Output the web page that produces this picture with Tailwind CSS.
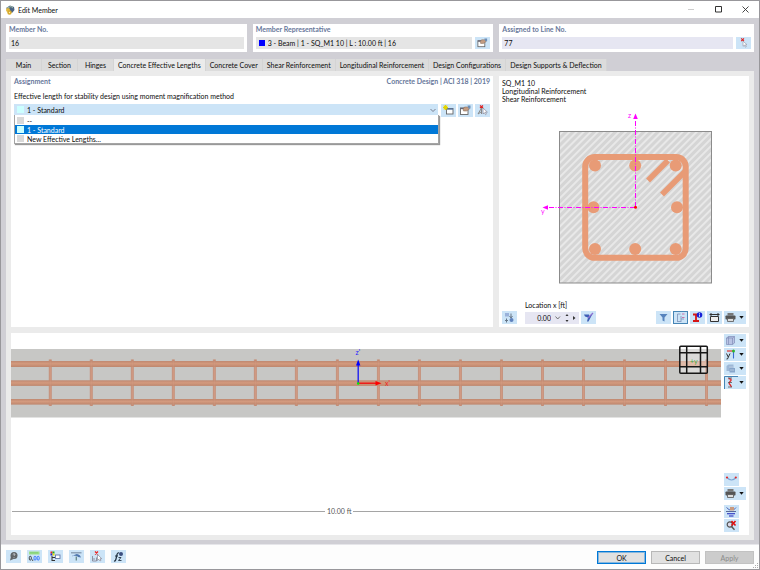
<!DOCTYPE html>
<html lang="en">
<head>
<meta charset="utf-8">
<title>Edit Member</title>
<script src="https://cdn.jsdelivr.net/npm/@tailwindcss/browser@4"></script>
</head>
<body class="min-h-screen flex flex-col border border-[#98979b] bg-[#d0cfd5] text-[7px] leading-[8px] text-[#0c0c0c] font-[Lato,'Open_Sans',sans-serif]">

<header class="h-[17px] bg-white flex items-center pl-1 shrink-0">
  <svg class="w-[10px] h-[10px]" viewBox="0 0 10 10"><path d="M1 3 5 0.5 9 2 9.5 5 7 8 4 6Z" fill="#4a6384"/><path d="M2 3 6 1.5 8 3" stroke="#9db8a0" fill="none"/><circle cx="3" cy="5" r="2" fill="#e2b93c"/><circle cx="4.500" cy="7.500" r="2.200" fill="#d7a92c"/><circle cx="4.500" cy="7.500" r=".7" fill="#fff2b0"/></svg>
  <h1 class="ml-[3px]">Edit Member</h1>
  <div class="ml-auto flex items-center">
    <button aria-label="Minimize" class="w-[27px] flex justify-center"><svg class="w-[7px] h-[7px]" viewBox="0 0 7 7"><path d="M0 3.500h6" stroke="#ccc"/></svg></button>
    <button aria-label="Maximize" class="w-[27px] flex justify-center"><svg class="w-[7px] h-[7px]" viewBox="0 0 7 7"><path d="M.5.5h6v5.500H.5z" fill="none" stroke="#333"/></svg></button>
    <button aria-label="Close" class="w-[27px] flex justify-center"><svg class="w-[7px] h-[7px]" viewBox="0 0 7 7"><path d="M.5.5l6 6M6.500.5l-6 6" stroke="#333" stroke-width=".9"/></svg></button>
  </div>
</header>

<main class="flex-1 flex flex-col px-[5px] pt-[6px] pb-[4px]">
  <section class="grid grid-cols-[241fr_241fr_255fr] gap-[6px]">
    <div class="bg-white px-[3px] pt-[1px] pb-[3px]">
      <label for="no" class="block leading-[9px] font-bold text-[#68789b]">Member No.</label>
      <input id="no" readonly value="16" class="mt-[3px] block w-full h-[12px] bg-[#e5e5e5] px-[2px]">
    </div>
    <div class="bg-white px-[3px] pt-[1px] pb-[3px]">
      <label for="rep" class="block leading-[9px] font-bold text-[#68789b]">Member Representative</label>
      <div class="mt-[3px] flex gap-[3px]">
        <div class="flex-1 flex items-center h-[12px] bg-[#e5e5e5] px-[3px] gap-[3px]"><span class="size-[6px] bg-[#0000ff]"></span><input id="rep" readonly value="3 - Beam | 1 - SQ_M1 10 | L : 10.00 ft | 16" class="flex-1 bg-transparent"></div>
        <button aria-label="Edit representative" class="w-[15px] h-[12px] bg-[#cce4f7]"><svg class="w-[15px] h-[12px]" viewBox="0 0 15 13"><use href="#edit"/></svg></button>
      </div>
    </div>
    <div class="bg-white px-[3px] pt-[1px] pb-[3px]">
      <label for="line" class="block leading-[9px] font-bold text-[#68789b]">Assigned to Line No.</label>
      <div class="mt-[3px] flex gap-[3px]">
        <input id="line" value="77" class="flex-1 h-[12px] bg-[#e6e6f2] px-[2px]">
        <button aria-label="Pick line" class="w-[15px] h-[12px] bg-[#cce4f7]"><svg class="w-[15px] h-[12px]" viewBox="0 0 15 13"><path d="M5 1.500l3 3M8 1.500l-3 3" stroke="#d22" stroke-width="1.100"/><path d="M7 4.500v5.500l1.500-1.200 1 2.200 1-.5-1-2 1.800-.2z" fill="#fff" stroke="#889" stroke-width=".6"/></svg></button>
      </div>
    </div>
  </section>

  <nav role="tablist" class="mt-[7px] flex">
    <div class="flex h-[12px] bg-[#dcdcdc] [&>button]:min-w-[36px] [&>button]:px-[4px] [&>button]:border-r [&>button]:border-[#d4d4d4]">
      <button role="tab">Main</button>
      <button role="tab">Section</button>
      <button role="tab">Hinges</button>
      <button role="tab" aria-selected="true" class="bg-[#ebebeb]">Concrete Effective Lengths</button>
      <button role="tab">Concrete Cover</button>
      <button role="tab">Shear Reinforcement</button>
      <button role="tab">Longitudinal Reinforcement</button>
      <button role="tab">Design Configurations</button>
      <button role="tab">Design Supports &amp; Deflection</button>
    </div>
  </nav>

  <div class="flex-1 flex flex-col gap-[6px] bg-[#ebebeb] p-[5px]">
    <div class="grid grid-cols-[482fr_250fr] gap-[6px]">
      <section class="bg-white px-[3px] pt-[1px]">
        <div class="flex justify-between leading-[9px] font-bold text-[#68789b]"><h2>Assignment</h2><p>Concrete Design | ACI 318 | 2019</p></div>
        <label for="eff" class="block mt-[6px] leading-[9px]">Effective length for stability design using moment magnification method</label>
        <div class="mt-[3px] flex gap-[2px]">
          <div class="relative flex-1 mr-[1px] h-[11px] bg-[#cce4f7]">
            <select id="eff" class="appearance-none block w-full h-full bg-transparent pl-[13px]"><option>1 - Standard</option></select>
            <span class="absolute left-[3px] top-[2px] size-[7px] bg-[#ccffff]"></span>
            <svg class="absolute right-[2px] top-[4px] w-[6px] h-[5px] pointer-events-none" viewBox="0 0 6 5"><path d="M.5 1l2.500 2.500L5.500 1" fill="none" stroke="#667" stroke-width=".8"/></svg>
            <ul role="listbox" class="absolute left-0 -right-px top-[11px] pt-px bg-white border border-[#a5a5a5] border-t-0 shadow-[1px_1px_1px_rgba(0,0,0,0.4)] [&>li]:h-[9px] [&>li]:flex [&>li]:items-center [&>li]:gap-[3px] [&>li]:pl-[2px]">
              <li role="option"><span class="size-[7px] bg-[#d9d9d9]"></span>--</li>
              <li role="option" aria-selected="true" class="bg-[#0078d7] text-white"><span class="size-[7px] bg-[#ccffff]"></span>1 - Standard</li>
              <li role="option"><span class="size-[7px] bg-[#d9d9d9]"></span>New Effective Lengths...</li>
            </ul>
          </div>
          <button aria-label="New" class="w-[15px] h-[13px] bg-[#cce4f7]"><svg viewBox="0 0 15 13"><rect x="5.500" y="4.500" width="6.500" height="5.500" fill="#fff" stroke="#666" stroke-width=".9"/><path d="M5.500 5h6.500" stroke="#54719c" stroke-width="1.400"/><path d="M4.500 1v5M2 3.500h5M2.700 1.700l3.600 3.600M6.300 1.700L2.700 5.300" stroke="#e3d400" stroke-width="1.100"/></svg></button>
          <button aria-label="Edit" class="w-[15px] h-[13px] bg-[#cce4f7]"><svg viewBox="0 0 15 13"><use href="#edit"/></svg></button>
          <button aria-label="Pick" class="w-[15px] h-[13px] bg-[#cce4f7]"><svg viewBox="0 0 15 13"><path d="M5 1.500l3 2.500M8 1.500L5 4" stroke="#d22" stroke-width="1.200"/><path d="M6.500 4L3 10M6.500 4v6M3 10l3-2" stroke="#888" fill="none"/><path d="M8 4v6l1.300-1.300 1.300 2 .8-.6-1-2 2 0z" fill="#fff" stroke="#889" stroke-width=".7"/></svg></button>
        </div>
      </section>

      <section class="bg-white p-[3px] min-h-[251px]">
        <div class="leading-[8px]"><p>SQ_M1 10</p><p>Longitudinal Reinforcement</p><p>Shear Reinforcement</p></div>
        <svg class="block w-full" viewBox="502 103 244 197" role="img" aria-label="Cross-section">
          <defs><pattern id="hatch" width="5" height="5" patternUnits="userSpaceOnUse" patternTransform="rotate(45)"><rect width="5" height="5" fill="#d5d5d5"/><path d="M1 0v5" stroke="#f8f8f8" stroke-width="1.100"/></pattern></defs>
          <rect x="559.500" y="131.500" width="152" height="151.500" fill="url(#hatch)" stroke="#8b8b8b"/>
          <g fill="none" stroke="#e89b76">
            <rect x="585.200" y="157" width="100.500" height="100.800" rx="9.500" stroke-width="6"/>
            <path d="M648 180.500l20-20M662 194.500l23-23" stroke-width="5.600"/>
          </g>
          <g fill="#e89b76"><circle cx="595" cy="165.500" r="6"/><circle cx="635.200" cy="165.500" r="6"/><circle cx="675.700" cy="165.500" r="6"/><circle cx="593.500" cy="207.200" r="6"/><circle cx="677" cy="207.200" r="6"/><circle cx="595" cy="249" r="6"/><circle cx="635.200" cy="249" r="6"/><circle cx="675.700" cy="249" r="6"/></g>
          <path d="M635.500 207V120M635 207.500h-87" fill="none" stroke="#f0f" stroke-width="1" stroke-dasharray="5 1.500 1 1.500"/>
          <path d="M635.500 113.500l2.300 5.500h-4.600zM542.500 207.500l5.500-2.300v4.600z" fill="#f0f"/>
          <circle cx="635.500" cy="207.300" r="1.500" fill="#f00"/>
          <g fill="#f0f" font-size="7"><text x="628" y="118">z</text><text x="541" y="214">y</text></g>
        </svg>
        <div class="mt-px flex items-end gap-[2px]">
          <button aria-label="Move location" class="w-[15px] h-[13px] bg-[#cce4f7] mr-[6px]"><svg viewBox="0 0 15 13"><rect x="3" y="2" width="4" height="3.500" fill="#9ab2da"/><path d="M9 2.500v4M7.500 5l1.500 2 1.500-2M3 9.500h3M4.500 7.500v4" stroke="#678" fill="none"/><circle cx="9.500" cy="9" r="2" fill="#5f82bd"/></svg></button>
          <div>
            <label for="loc" class="block leading-[9px] mb-[2px]">Location x [ft]</label>
            <div class="flex items-center h-[12px] w-[54px] bg-[#e6e6f2]">
              <input id="loc" value="0.00" class="w-[26px] bg-transparent text-right">
              <svg class="w-[28px] h-[12px]" viewBox="0 0 28 12"><path d="M4.500 4.500L6.700 7 9 4.500" fill="none" stroke="#555" stroke-width=".8"/><path d="M14.500 4l1.500-2 1.500 2zM14.500 8l1.500 2 1.500-2zM22 4l2.500 2-2.500 2z" fill="#333"/></svg>
            </div>
          </div>
          <button aria-label="Set location" class="w-[15px] h-[13px] bg-[#cce4f7]"><svg viewBox="0 0 15 13"><path d="M3 3.500h5l.5 2 3-2.500-4 7.500H6l1-4-3-1z" fill="#3d5fb5"/><path d="M12 2L7 7" stroke="#8a6fd0" stroke-width="1.300"/></svg></button>
          <div class="ml-auto flex gap-[2px]">
            <button aria-label="Filter" class="w-[15px] h-[13px] bg-[#cce4f7]"><svg viewBox="0 0 15 13"><path d="M3.500 3h8L8.500 6.500V10.500L6.500 9.500V6.500z" fill="#5683bd"/></svg></button>
            <button aria-label="Show labels" class="w-[15px] h-[13px] bg-[#cce4f7] border border-[#4685b5]"><svg viewBox="1 1 13 11"><path d="M4.500 3v8M4.500 3h3M4.500 10.500h4M8 5v3h3M8 8v2" fill="none" stroke="#8398bd" stroke-width=".9"/><path d="M9 3h2.500M9 6.500h2.500" stroke="#c86aa0" stroke-width=".9"/></svg></button>
            <button aria-label="Stress info" class="w-[15px] h-[13px] bg-[#cce4f7]"><svg viewBox="0 0 15 13"><path d="M3 3.500h6M3 10h6M6 3.500v6.500" stroke="#d51515" stroke-width="1.800"/><circle cx="9.500" cy="4" r="2.800" fill="#1720d8"/><path d="M9.500 3.500v2.300M9.500 2v.8" stroke="#fff" stroke-width=".8"/></svg></button>
            <button aria-label="Dimensions" class="w-[15px] h-[13px] bg-[#cce4f7]"><svg viewBox="0 0 15 13"><path d="M3.500 5.500h8v5h-8z" fill="#eee" stroke="#333"/><path d="M2.500 3.500h10M4 2v3M11 2v3" stroke="#333"/></svg></button>
            <button aria-label="Print" class="w-[22px] h-[13px] bg-[#cce4f7]"><svg viewBox="0 0 22 13"><use href="#print"/><use href="#drop"/></svg></button>
          </div>
        </div>
      </section>
    </div>

    <section class="flex-1 flex bg-white pr-[3px]">
      <svg class="block flex-1 min-w-0" viewBox="11 333 710 202" role="img" aria-label="Beam reinforcement elevation">
        <defs>
          <pattern id="stirrup" x="48.800" y="0" width="41.015" height="600" patternUnits="userSpaceOnUse"><path d="M1.500 359.500v46.500" stroke="#c48a72" stroke-width="2.600"/><path d="M1.500 361v44" stroke="#d39b83" stroke-width="1"/></pattern>
          <linearGradient id="bar" x2="0" y2="1"><stop offset="0" stop-color="#bf8870"/><stop offset=".45" stop-color="#d39a7e"/><stop offset="1" stop-color="#be866d"/></linearGradient>
        </defs>
        <rect x="11" y="349" width="710" height="68.500" fill="#c7c7c5"/>
        <rect x="48" y="357" width="672" height="52" fill="url(#stirrup)"/>
        <g fill="url(#bar)"><rect x="11" y="361" width="710" height="6"/><rect x="11" y="380.300" width="710" height="5.600"/><rect x="11" y="399" width="710" height="5.600"/></g>
        <rect x="48" y="357" width="672" height="52" fill="url(#stirrup)" opacity=".35"/>
        <path d="M358.200 383v-18" stroke="#2020f0" stroke-width="1.400"/><path d="M358.200 359.500l2.200 6h-4.400z" fill="#00f"/>
        <path d="M358 383.200h18" stroke="#f01010" stroke-width="1.400"/><path d="M381.500 383.200l-6-2.200v4.400z" fill="#f00"/>
        <circle cx="358.200" cy="383.500" r="1.300" fill="#0e0"/>
        <text x="355.500" y="355" font-size="7" fill="#22f">z'</text><text x="385" y="385.500" font-size="7" fill="#e22">x'</text>
        <rect x="680" y="347" width="27.500" height="26.500" fill="#fff" opacity=".35"/>
        <g fill="none" stroke="#161616" stroke-width="1.500"><rect x="679.800" y="346.200" width="27.500" height="27" rx="1"/><path d="M686.700 346v27.500M700.500 346v27.500M679.500 352.700h28M679.500 366.700h28"/></g>
        <text x="690" y="363.500" font-size="7" fill="#43a843">+y</text>
        <path d="M12 511.500h313M353 511.500h368" stroke="#9b9b9b" stroke-width=".9"/>
        <text x="327" y="514" font-size="7" fill="#555">10.00 ft</text>
      </svg>
      <div class="w-[25px] pl-[3px] pt-[1px] pb-[3px] flex flex-col items-start gap-[1px]">
        <button aria-label="View" class="w-[22px] h-[13px] bg-[#cce4f7]"><svg viewBox="0 0 22 13"><path d="M2.500 4l2-1.500h6v6.500l-2 1.500h-6zM2.500 4h6v6.500M8.500 4l2-1.500M4.500 2.500v8" fill="#b9c4e4" stroke="#7f8cb8" stroke-width=".7"/><use href="#drop"/></svg></button>
        <button aria-label="View direction" class="w-[22px] h-[13px] bg-[#cce4f7]"><svg viewBox="0 0 22 13"><path d="M3 3h6" stroke="#e04040" stroke-width="1.300"/><path d="M9.500 4v6.500" stroke="#3b6bd0" stroke-width="1.100"/><circle cx="9.500" cy="3" r="1.500" fill="#2eb62e"/><path d="M2.500 5.500L4.200 9M6 5.500L3.500 11H2.500" stroke="#222" fill="none" stroke-width=".9"/><use href="#drop"/></svg></button>
        <button aria-label="Rendering" class="w-[22px] h-[13px] bg-[#cce4f7]"><svg viewBox="0 0 22 13"><path d="M2.500 4l2-1.500h5v5l-2 1.500h-5z" fill="#9db7d6"/><path d="M5.500 6h5.500v4.500H5.500z" fill="#86a5ca"/><path d="M5 5h4M6 8h4" stroke="#c7d6e8" stroke-width=".7"/><use href="#drop"/></svg></button>
        <button aria-label="Reinforcement display" class="w-[22px] h-[13px] bg-[#cce4f7]"><svg viewBox="0 0 22 13"><path d="M.5 13V.5H14" fill="none" stroke="#4685b5"/><path d="M4.500 2.500q4 .5 2 2.500t-1 3 2 3" fill="none" stroke="#e02a2a" stroke-width="1.300"/><path d="M4 2h4M4 6.500h4M4 11h4" stroke="#555" stroke-width=".8"/><use href="#drop"/></svg></button>
        <div class="flex-1"></div>
        <button aria-label="Deformation" class="w-[15px] h-[13px] bg-[#cce4f7]"><svg viewBox="0 0 15 13"><path d="M3 4.500q4.500 5 9 0" fill="none" stroke="#7ca4d5" stroke-width="1.200"/><circle cx="3" cy="4.500" r="1.100" fill="#e02a2a"/><circle cx="11.800" cy="4.500" r="1.100" fill="#e02a2a"/></svg></button>
        <button aria-label="Print graphic" class="w-[22px] h-[13px] bg-[#cce4f7]"><svg viewBox="0 0 22 13"><use href="#print"/><use href="#drop"/></svg></button>
        <button aria-label="Legend" class="w-[15px] h-[13px] bg-[#cce4f7] mt-[4px]"><svg viewBox="0 0 15 13"><path d="M2.500 2.500l3 2.500 2-2.500 2 2.500 2.500-2.500" fill="none" stroke="#4d65b8"/><path d="M6 2h4v3.500H6z" fill="#c99b80"/><path d="M2 6.500h10" stroke="#58699a"/><path d="M3 8.800h8M5 11h4.500" stroke="#1a22bd" stroke-width="1.100"/></svg></button>
        <button aria-label="Reset zoom" class="w-[15px] h-[13px] bg-[#cce4f7]"><svg viewBox="0 0 15 13"><circle cx="5.800" cy="5.500" r="2.600" fill="#dde" stroke="#555" stroke-width="1.200"/><path d="M7.500 7.500l3 3.200" stroke="#555" stroke-width="1.400"/><path d="M7.500 2l4 4.500M11.500 2l-4 4.500" stroke="#e01010" stroke-width="1.600"/></svg></button>
      </div>
    </section>
  </div>
</main>

<footer class="relative h-[25px] shrink-0 bg-[#fdfdfd] border-t border-[#e6e6ea] flex items-center px-[5px]">
  <div class="flex gap-[6px] pb-[1px] [&>button]:w-[15px] [&>button]:h-[13px] [&>button]:bg-[#cce4f7]">
    <button aria-label="Help"><svg viewBox="0 0 15 13"><circle cx="8" cy="5.500" r="3.500" fill="#606468"/><path d="M4 10.500l1-4 2.500 2.500z" fill="#606468"/><path d="M6.800 4.500q1.200-1.400 2.200-.3 0 .8-1 1.600M8 7v.7" stroke="#dfe6ec" stroke-width=".8" fill="none"/></svg></button>
    <button aria-label="Units"><svg viewBox="0 0 15 13"><path d="M2 1.500h10.500v3H2z" fill="#9be08a"/><path d="M4 2v1.500M6 2v1.500M8 2v1.500M10 2v1.500" stroke="#5a5" stroke-width=".5"/><g fill="none" stroke-width=".8"><rect x="2.300" y="6.300" width="2" height="3.800" rx="1" stroke="#222"/><path d="M5.700 9.500v1.500" stroke="#222"/><rect x="7" y="6.300" width="2" height="3.800" rx="1" stroke="#26f"/><rect x="10.200" y="6.300" width="2" height="3.800" rx="1" stroke="#26f"/></g></svg></button>
    <button aria-label="Display properties"><svg viewBox="0 0 15 13"><path d="M2.500 1.500h2v2h-2z" fill="#e22"/><path d="M4.500 1.500h2v2h-2z" fill="#2a2"/><path d="M2.500 3.500h2v2h-2z" fill="#22c"/><path d="M4.500 3.500h2v2h-2z" fill="#ed0"/><path d="M4 6v5M4 7.500h3M4 10.500h3" stroke="#333"/><rect x="7.500" y="5" width="4.500" height="3.500" fill="#fff" stroke="#6679a8" stroke-width=".9"/></svg></button>
    <button aria-label="Preview"><svg viewBox="0 0 15 13"><path d="M2 2h10.500v1.500H2z" fill="#8fa3b8"/><path d="M3.500 6.500q4-4.500 7.500-1l1 2-3-.5-1-1q-2-.5-4.500-.5z" fill="#4f76ad"/><path d="M7.300 6.500v4" stroke="#688" stroke-width="1.300"/></svg></button>
    <button aria-label="Select object"><svg viewBox="0 0 15 13"><path d="M5 1.500l3 3M8 1.500l-3 3" stroke="#e22" stroke-width="1.200"/><path d="M2.500 6v5h4V7.500M4 8v2" stroke="#889" fill="none" stroke-width=".9"/><path d="M7.500 4.500v6l1.300-1.300 1.200 1.800 1-.7-1-1.600h1.800z" fill="#fff" stroke="#889" stroke-width=".7"/></svg></button>
    <button aria-label="Formula"><svg viewBox="0 0 15 13"><path d="M3 11q1.500.3 2-2L6 4.500Q6.500 2.500 8 3M4 6h3" fill="none" stroke="#234" stroke-width="1.200"/><path d="M7.500 7.500h2.500L7.500 10.500h3" stroke="#234" fill="none" stroke-width=".9"/><circle cx="10" cy="4" r="2" fill="#3c4f80"/></svg></button>
  </div>
  <div class="ml-auto flex gap-[5px] pt-[1px] [&>button]:w-[49px] [&>button]:h-[13px] [&>button]:border">
    <button class="bg-[#e1e1e1] border-[#0078d7] ring-1 ring-inset ring-[#0078d7]/40">OK</button>
    <button class="bg-[#e1e1e1] border-[#b8b8b8]">Cancel</button>
    <button disabled class="bg-[#cccccc] border-[#c2c2c2] text-[#8a8a8a]">Apply</button>
  </div>
  <svg class="absolute right-0 bottom-0 w-[6px] h-[6px]" viewBox="0 0 6 6"><path d="M4 0h1v1H4zM2 2h1v1H2zM4 2h1v1H4zM0 4h1v1H0zM2 4h1v1H2zM4 4h1v1H4z" fill="#aaa"/></svg>
</footer>

<svg class="hidden" aria-hidden="true">
  <symbol id="edit" viewBox="0 0 15 13" width="15" height="13"><rect x="2.500" y="4" width="7.500" height="6.500" fill="#fff" stroke="#666" stroke-width=".9"/><path d="M2.500 4.500h7.500" stroke="#667" stroke-width="1.300"/><path d="M5 5l1.500-2h4l1 2-3 2H5.500z" fill="#c49c82" stroke="#7d6453" stroke-width=".5"/><path d="M9.500 1.500h3v3h-2z" fill="#6d8fb8"/></symbol>
  <symbol id="print" viewBox="0 0 15 13" width="15" height="13"><path d="M3.500 2h6v2.500h-6z" fill="#777"/><rect x="1.500" y="4.500" width="10" height="4" rx=".8" fill="#555"/><path d="M3.500 7.500h6v3h-6z" fill="#ddd" stroke="#555" stroke-width=".8"/></symbol>
  <symbol id="drop" viewBox="0 0 22 13" width="22" height="13"><path d="M15.300 5h4.400l-2.200 2.800z" fill="#111"/></symbol>
</svg>
</body>
</html>
